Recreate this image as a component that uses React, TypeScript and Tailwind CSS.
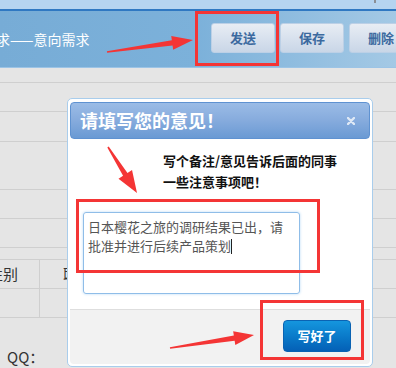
import React from 'react';

const font = { fontFamily: '"Noto Sans CJK SC", "Liberation Sans", sans-serif' };

// builds a tapered arrow outline, thin at the tail, wide head at the tip
function arrow(x1: number, y1: number, x2: number, y2: number, headLen = 22, headHalf = 8, tailHalf = 0.8, neckHalf = 2.6) {
  const dx = x2 - x1;
  const dy = y2 - y1;
  const len = Math.hypot(dx, dy);
  const ux = dx / len;
  const uy = dy / len;
  const px = -uy;
  const py = ux;
  const bx = x2 - ux * headLen;
  const by = y2 - uy * headLen;
  const pts = [
    [x1 + px * tailHalf, y1 + py * tailHalf],
    [bx + px * neckHalf, by + py * neckHalf],
    [bx + px * headHalf, by + py * headHalf],
    [x2, y2],
    [bx - px * headHalf, by - py * headHalf],
    [bx - px * neckHalf, by - py * neckHalf],
    [x1 - px * tailHalf, y1 - py * tailHalf],
  ];
  return pts.map(p => p.join(',')).join(' ');
}

function HeaderButton({ label }: { label: string }) {
  return (
    <div className="w-[64px] h-[30px] shrink-0 rounded-[3px] border border-[#bcd0e6] bg-gradient-to-b from-[#e8edf4] to-[#c9d6e7] flex items-center justify-center text-[13px] font-bold text-[#3c6a9f]">
      {label}
    </div>
  );
}

export default function App() {
  return (
    <div className="relative w-[396px] h-[368px] overflow-hidden bg-[#e5e5e5]" style={font}>
      {/* top strip */}
      <div className="relative h-[9px] bg-[#b5d4f0]">
        <div className="absolute left-[374px] top-0 w-[2px] h-[3px] bg-[#8a8f96]" />
      </div>
      <div className="h-[2px] bg-[#2f78c2]" />

      {/* header */}
      <div className="h-[57px] flex overflow-hidden bg-gradient-to-r from-[#77acd6] via-[#7cb1da] to-[#a4c9e5] border-b border-[#9cc4e6]">
        <div className="w-[215px] shrink-0 ml-[-4px] self-center text-[14px] text-white whitespace-nowrap">
          求——意向需求
        </div>
        <div className="flex gap-[5px] pt-[12px]">
          <HeaderButton label="发送" />
          <HeaderButton label="保存" />
          <HeaderButton label="删除" />
        </div>
      </div>

      {/* background form rows */}
      <div>
        <div className="h-[15px] border-b border-[#cfcfcf]" />
        <div className="h-[29px] border-b border-[#cfcfcf]" />
        <div className="h-[30px] border-b border-[#cfcfcf]" />
        <div className="h-[48px] border-b border-[#cfcfcf]" />
        <div className="h-[29px] border-b border-[#cfcfcf]" />
        <div className="h-[29px] border-b border-[#cfcfcf]" />
        <div className="h-[12px] border-b border-[#cfcfcf]" />
        <div className="h-[29px] border-b border-[#cfcfcf] flex">
          <div className="w-[40px] shrink-0 border-r border-[#cfcfcf] flex items-center overflow-hidden text-[15px] text-[#333] whitespace-nowrap">
            <span className="ml-[-12px]">性别</span>
          </div>
          <div className="pl-[23px] flex items-center text-[15px] text-[#333]">联系</div>
        </div>
        <div className="h-[29px] border-b border-[#cfcfcf] flex">
          <div className="w-[40px] border-r border-[#cfcfcf]" />
        </div>
        <div className="pl-[7px] pt-[28px] text-[15px] text-[#333]">QQ：</div>
      </div>

      {/* dialog */}
      <div className="absolute left-[67px] top-[98px] w-[306px] h-[269px] rounded-[5px] border border-[#a9cdec] bg-white p-[2px] flex flex-col">
        <div className="h-[37px] mt-[1px] shrink-0 rounded-[4px] border border-[#5f92d1] bg-gradient-to-b from-[#9bbce6] via-[#86abdd] to-[#6a9ad4] flex items-center justify-between pl-[9px] pr-[14px]">
          <span className="text-[18px] font-bold text-white">请填写您的意见！</span>
          <svg width="8" height="8" viewBox="0 0 8 8">
            <path d="M1 1L7 7M7 1L1 7" stroke="#dfe9f6" strokeWidth="2.4" strokeLinecap="round" />
          </svg>
        </div>
        <div className="h-[170px] shrink-0">
          <div className="pl-[93px] mt-[11px] text-[13px] font-bold text-[#111] leading-[21px]">
            写个备注/意见告诉后面的同事<br />一些注意事项吧！
          </div>
          <div className="ml-[13px] mt-[20px] w-[217px] h-[82px] rounded-[3px] border border-[#8fbde8] shadow-[0_0_3px_#b9daf5] px-[4px] pt-[4px] text-[13px] leading-[19px] text-[#555]">
            日本樱花之旅的调研结果已出，请<br />
            批准并进行后续产品策划<span className="inline-block w-[1px] h-[15px] bg-[#222] align-[-3px]" />
          </div>
        </div>
        <div className="flex-1 border-t border-[#dedede] bg-[#f2f2f2] flex justify-end items-start pt-[10px] pr-[19px] rounded-b-[4px]">
          <div className="w-[68px] h-[32px] rounded-[4px] border border-[#0a63b3] bg-gradient-to-b from-[#1596de] to-[#0560b6] flex items-center justify-center text-[13px] font-bold text-white">
            写好了
          </div>
        </div>
      </div>

      {/* red annotations */}
      <svg className="absolute inset-0 pointer-events-none" width="396" height="368" viewBox="0 0 396 368">
        <rect x="196.5" y="12.5" width="81" height="52" fill="none" stroke="#f43535" strokeWidth="3" />
        <rect x="77.5" y="200.5" width="241" height="71" fill="none" stroke="#f43535" strokeWidth="3" />
        <rect x="261.5" y="301.5" width="101" height="57" fill="none" stroke="#f43535" strokeWidth="3" />
        <polygon points={arrow(107, 52, 193, 40, 21, 7)} fill="#f43535" />
        <polygon points={arrow(108, 147, 137, 193, 22, 8)} fill="#f43535" />
        <polygon points={arrow(170, 348, 254, 335, 20, 7)} fill="#f43535" />
      </svg>
    </div>
  );
}
